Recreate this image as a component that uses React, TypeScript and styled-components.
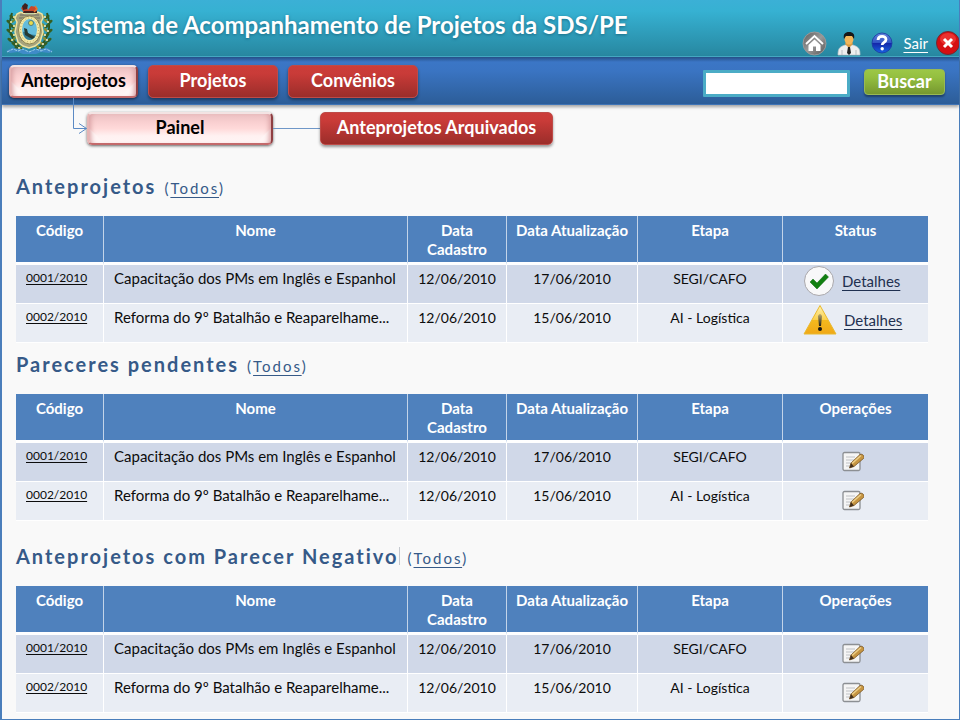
import React from "react";
import styled, { createGlobalStyle, css } from "styled-components";

const GlobalStyle = createGlobalStyle`
  *, *::before, *::after { box-sizing: border-box; }
  html, body, #root { margin: 0; min-height: 100%; }
  body {
    background: #f9f9f9;
    color: #0c0c0c;
    font-family: Lato, "Open Sans", sans-serif;
    font-size: 15px;
    line-height: 19px;
  }
  button, input { font: inherit; }
`;

const Page = styled.div`
  min-height: 100vh;
  background: #f9f9f9;
  border: solid #4a7ebb;
  border-width: 0 1px 1px 2px;
`;

const Header = styled.header`
  display: flex;
  align-items: center;
  height: 57px;
  padding-left: 2px;
  background: linear-gradient(#3bb0d6, #36b1d2 20%, #2787a0);
  border-bottom: 1px solid #46aac5;
`;

const Title = styled.h1`
  flex: 1;
  margin: 0 0 6px 8px;
  color: #fff;
  font-size: 24px;
  line-height: 32px;
  font-weight: 700;
  white-space: nowrap;
  text-shadow: 0 1px 3px #1b6c86;
`;

const Tools = styled.div`
  display: flex;
  align-items: center;
  align-self: flex-end;
  gap: 10px;
  height: 26px;
`;

const IconButton = styled.button`
  display: flex;
  padding: 0;
  border: 0;
  background: none;
  cursor: pointer;
`;

const ExitLink = styled.a`
  color: #fff;
  text-underline-offset: 3px;
`;

const ExitGroup = styled.div`
  display: flex;
  align-items: center;
  gap: 8px;
`;

const Nav = styled.nav`
  display: flex;
  align-items: flex-start;
  gap: 10px;
  height: 48px;
  padding: 8px 14px 0 7px;
  background: linear-gradient(#254f86, #3b76c6 5px, #3a74c2 30%, #2c5d98);
  border-bottom: 1px solid #3f74b6;
  box-shadow: 0 2px 3px rgba(0, 0, 0, 0.35);
`;

const TabSlot = styled.div`
  position: relative;
`;

const Tab = styled.button<{ $active?: boolean; $width: number }>`
  display: block;
  width: ${(p) => p.$width}px;
  height: 33px;
  padding: 0 0 2px;
  border: 1px solid #be4b48;
  border-radius: 5px;
  background: linear-gradient(#cb3d3a, #c93b38 25%, #9b2d2a);
  box-shadow: 0 2px 3px rgba(0, 0, 0, 0.4);
  color: #fff;
  font-size: 18px;
  font-weight: 700;
  white-space: nowrap;
  cursor: pointer;

  ${(p) =>
    p.$active &&
    css`
      border: 2px solid;
      border-color: #f3e3e3 #8f3f42 #c46a6c #e6b4b4;
      background:
        linear-gradient(45deg, #fff5f5 10px, transparent 11px),
        linear-gradient(-45deg, #fff5f5 10px, transparent 11px),
        linear-gradient(#eabfc1, #f9cfd0 8px, #ffd9d9 50%, #fff1f1 75%, #fff4f4);
      box-shadow:
        0 1px 3px rgba(0, 0, 0, 0.6),
        inset 6px 0 5px -4px #d9a0a3,
        inset -6px 0 5px -4px #d9a0a3;
      color: #000;
    `}
`;

const Elbow = styled.svg`
  position: absolute;
  top: 100%;
  left: 63px;
`;

const Search = styled.form`
  display: flex;
  align-items: flex-start;
  gap: 14px;
  margin-left: auto;
  padding-top: 4px;
`;

const SearchInput = styled.input`
  width: 147px;
  height: 27px;
  margin-top: 1px;
  padding: 0 4px;
  border: 3px solid #4bacc6;
  border-radius: 1px;
  background: #fff;
  outline: 0;
`;

const SearchButton = styled.button`
  width: 81px;
  height: 26px;
  padding: 0 0 2px;
  border: 1px solid #98b954;
  border-radius: 4px;
  background: linear-gradient(#9cc746, #94bf40 30%, #76982f);
  box-shadow: 0 2px 2px rgba(0, 0, 0, 0.35);
  color: #fff;
  font-size: 18px;
  font-weight: 700;
  cursor: pointer;
`;

const SubNav = styled.nav`
  display: flex;
  align-items: center;
  padding: 7px 14px 0 85px;
`;

const Joint = styled.span`
  width: 47px;
  height: 1px;
  background: #6f97c8;
`;

const Main = styled.main`
  padding: 29px 31px 6px 14px;
`;

const Section = styled.section<{ $space: number }>`
  margin-bottom: ${(p) => p.$space}px;
`;

const SectionTitle = styled.h2`
  display: flex;
  align-items: baseline;
  gap: 8px;
  margin: 0 0 14px;
  color: #365a88;
  font-size: 20px;
  line-height: 28px;
  font-weight: 700;
  letter-spacing: 2px;
  white-space: nowrap;
`;

const SectionName = styled.span<{ $caret?: boolean }>`
  border-right: ${(p) => (p.$caret ? "1px solid #c4c8ce" : "0")};
  line-height: 18px;
`;

const AllLinks = styled.span`
  font-size: 15px;
  font-weight: 400;
`;

const AllLink = styled.a`
  color: inherit;
  text-underline-offset: 3px;
`;

const Table = styled.table`
  width: 100%;
  table-layout: fixed;
  border-collapse: separate;
  border-spacing: 0;
`;

const HeadCell = styled.th`
  height: 49px;
  padding: 5px 6px 3px;
  border-right: 1px solid #c3d4e9;
  border-bottom: 3px solid #fff;
  background: #4f81bd;
  color: #fff;
  font-size: 15px;
  font-weight: 700;
  text-align: center;
  vertical-align: top;

  &:last-child { border-right: 0; }
`;

const Row = styled.tr`
  background: #e9edf4;

  &:nth-child(odd) { background: #d0d8e8; }
`;

const Cell = styled.td<{ $left?: boolean }>`
  height: 39px;
  padding: 4px ${(p) => (p.$left ? 10 : 4)}px;
  border-right: 1px solid #fff;
  border-bottom: 1px solid #fff;
  font-size: ${(p) => (p.$left ? 15 : 14)}px;
  text-align: ${(p) => (p.$left ? "left" : "center")};
  vertical-align: top;
  white-space: nowrap;

  &:last-child { border-right: 0; }
`;

const IconCell = styled(Cell)`
  padding: 0 20px;
`;

const CodeLink = styled.a`
  display: block;
  color: #0c0c0c;
  font-size: 12px;
  line-height: 17px;
  text-underline-offset: 2px;
`;

const Status = styled.div`
  display: flex;
  align-items: center;
  gap: 7px;
`;

const DetailLink = styled.a`
  color: #1f3050;
  font-size: 15px;
  text-underline-offset: 3px;
`;

const EditButton = styled(IconButton)`
  margin: 8px 0 0 39px;
`;

const leaves = [
  [10, 15], [7, 20], [10, 24], [7, 29], [10, 33], [8, 38], [12, 42], [15, 46],
];

function Emblem() {
  return (
    <svg width="50" height="52" viewBox="0 0 50 52" role="img" aria-label="Brasão de Pernambuco">
      <g fill="none" stroke="#2f5520" strokeWidth="2">
        <path d="M8 11C4 23 5 37 18 47" />
        <path d="M43 11C47 23 46 37 33 47" />
      </g>
      {leaves.map(([x, y], i) => (
        <g key={i}>
          <ellipse cx={x - 2} cy={y} rx="3" ry="1.5" fill="#355e22" transform={`rotate(35 ${x - 2} ${y})`} />
          <ellipse cx={x + 2} cy={y - 1} rx="2.6" ry="1.3" fill="#6f8b35" transform={`rotate(-40 ${x + 2} ${y - 1})`} />
          <circle cx={x} cy={y} r="1" fill="#f5eeb8" />
          <ellipse cx={53 - x} cy={y} rx="3" ry="1.5" fill="#355e22" transform={`rotate(-35 ${53 - x} ${y})`} />
          <ellipse cx={49 - x} cy={y - 1} rx="2.6" ry="1.3" fill="#8b8e35" transform={`rotate(40 ${49 - x} ${y - 1})`} />
          <circle cx={51 - x} cy={y} r="1" fill="#f2f0d8" />
        </g>
      ))}
      <path d="M13 12l4-2 4 2h9l4-2 4 2 1 4-2 4 2 10-3 10-5 4-6 2-6-2-5-4-3-10 2-10-2-4z" fill="#a5a37d" stroke="#eee3a0" strokeWidth="1.5" />
      <path d="M16 13h19M15 16h21M16 19h19M15 34h21M17 38h17" stroke="#716b66" strokeWidth="1" />
      <ellipse cx="25.500" cy="28" rx="11" ry="14" fill="#f2e7a5" stroke="#8e8652" strokeWidth="1" />
      <ellipse cx="25.500" cy="28" rx="9" ry="12" fill="none" stroke="#b6a75d" strokeWidth="1" strokeDasharray="1 2" />
      <ellipse cx="25.500" cy="27.500" rx="7.500" ry="10.500" fill="#63bcdc" />
      <path d="M19 30c3-1 5 3 13 3-1 3-4 5-6.500 5-4 0-6-4-6.500-8z" fill="#347b91" />
      <path d="M20 26l3 1 1 4 7 4-3 2-7-4z" fill="#263b32" />
      <circle cx="27" cy="21" r="2.500" fill="#e9dc4c" stroke="#537e78" />
      <path d="M20 11l-3-5 3-3 3 2 1 3 3-4 5 1 1 5-3 1z" fill="#c8472b" />
      <path d="M18 4l3-3 3 2-1 4-4 1zM20 9h13v2H19z" fill="#40211f" />
      <path d="M31 4l2 3-3 3" fill="none" stroke="#e7762f" strokeWidth="1.500" />
      <path d="M2 49l6-3 8 1 9 2 9-2 9-1 6 3-4 2-8-1-5 2h-13l-5-2-8 1z" fill="#3f8bc8" />
      <path d="M3 50l6-3 5 2 5-2 6 3 7-3 5 2 5-2 6 3" fill="none" stroke="#9cd0ec" strokeWidth="1" strokeDasharray="3 1" />
    </svg>
  );
}

function HomeIcon() {
  return (
    <svg width="25" height="25" viewBox="0 0 25 25" aria-hidden="true">
      <defs>
        <linearGradient id="home" x1="0" y1="0" x2="1" y2="1">
          <stop stopColor="#5c5c5c" /><stop offset=".5" stopColor="#999" /><stop offset="1" stopColor="#555" />
        </linearGradient>
      </defs>
      <circle cx="12.500" cy="12.500" r="11.500" fill="url(#home)" stroke="#999" />
      <path d="M4 13l8.500-8 8.500 8" fill="none" stroke="#fff" strokeWidth="1.800" />
      <path d="M6.500 14l6-5.500 6 5.500v6H14v-4.500h-3V20H6.500z" fill="#fff" />
    </svg>
  );
}

function UserIcon() {
  return (
    <svg width="24" height="25" viewBox="0 0 24 25" aria-hidden="true">
      <path d="M1 24c0-6 1-8 7-10h8c6 2 7 4 7 10z" fill="#eee" stroke="#bfc4c8" strokeWidth=".7" />
      <path d="M5 19v5M19 19v5" stroke="#b8bcc0" />
      <path d="M8 13l4 4 4-4-1-2H9z" fill="#d99b45" />
      <ellipse cx="12" cy="8" rx="4.500" ry="5.500" fill="#f2b65b" />
      <path d="M7 8c-1-5 1-7 5-7s6 2 5 7l-2-3H9z" fill="#181818" />
      <path d="M11 16h2l1 6-2 2-2-2z" fill="#222" />
    </svg>
  );
}

function HelpIcon() {
  return (
    <svg width="22" height="22" viewBox="0 0 22 22" aria-hidden="true">
      <defs>
        <linearGradient id="help" x1="0" y1="0" x2="0" y2="1">
          <stop stopColor="#6687dc" /><stop offset=".48" stopColor="#3155c5" />
          <stop offset=".5" stopColor="#1425a7" /><stop offset="1" stopColor="#1764e2" />
        </linearGradient>
      </defs>
      <circle cx="11" cy="11" r="10" fill="url(#help)" stroke="#1a37a2" strokeWidth=".8" />
      <path d="M7 8c.3-5 8-4.700 8-.5 0 3-3.800 2.700-3.800 5.500" fill="none" stroke="#fff" strokeWidth="2.800" />
      <circle cx="11.200" cy="16.800" r="1.700" fill="#fff" />
    </svg>
  );
}

function CloseIcon() {
  return (
    <svg width="23" height="24" viewBox="0 0 23 24" aria-hidden="true">
      <circle cx="12" cy="12" r="11.500" fill="#d60e12" stroke="#702b34" />
      <ellipse cx="12" cy="8" rx="8" ry="6" fill="#f54a42" opacity=".6" />
      <path d="M8 8l8 8M16 8l-8 8" stroke="#fff" strokeWidth="3" />
    </svg>
  );
}

function CheckIcon() {
  return (
    <svg width="32" height="32" viewBox="0 0 32 32" role="img" aria-label="Aprovado">
      <circle cx="16" cy="16" r="14.500" fill="#f8f8f9" stroke="#a9a7ab" />
      <path d="M7 17l3-3 4 4 8.500-9 3 3L14 24z" fill="#128012" stroke="#0a690b" strokeWidth=".5" />
    </svg>
  );
}

function WarningIcon() {
  return (
    <svg width="34" height="32" viewBox="1 0 32 32" role="img" aria-label="Atenção">
      <defs>
        <linearGradient id="warning" x1="0" y1="0" x2="0" y2="1">
          <stop stopColor="#fff3b1" /><stop offset=".5" stopColor="#fbd04b" />
          <stop offset=".52" stopColor="#f5b91d" /><stop offset="1" stopColor="#f0a817" />
        </linearGradient>
        <linearGradient id="mark" x1="0" y1="0" x2="0" y2="1">
          <stop stopColor="#bba96c" /><stop offset="1" stopColor="#201d16" />
        </linearGradient>
      </defs>
      <path d="M17 1.500L33 30H1z" fill="url(#warning)" stroke="#e9b92e" strokeLinejoin="round" />
      <path d="M15 12q2-4 4 0l-1 10h-2z" fill="url(#mark)" />
      <circle cx="17" cy="25" r="2" fill="#161411" />
    </svg>
  );
}

function EditIcon() {
  return (
    <svg width="22" height="22" viewBox="0 0 22 22" aria-hidden="true">
      <rect x="1" y="1.500" width="17" height="18" rx="1.500" fill="#f5f5f5" stroke="#8c8f93" strokeWidth="1.300" />
      <path d="M4 6h9M4 9h8M4 12h5M4 15h4" stroke="#bfc1c4" />
      <path d="M7.500 17l1.500-5 9-8.500q2-1 3.500 1t0 3L12 15.500z" fill="#c69542" stroke="#795525" strokeWidth=".8" />
      <path d="M10 12.500l9-8" stroke="#edcf88" strokeWidth="1.500" />
      <path d="M7.500 17l1.500-5 3 3.500z" fill="#44301e" />
    </svg>
  );
}

type Kind = "status" | "edit";

const rows = [
  { code: "0001/2010", name: "Capacitação dos PMs em Inglês e Espanhol", created: "12/06/2010", updated: "17/06/2010", stage: "SEGI/CAFO", ok: true },
  { code: "0002/2010", name: "Reforma do 9º Batalhão e Reaparelhame...", created: "12/06/2010", updated: "15/06/2010", stage: "AI - Logística", ok: false },
];

const columnWidths = [88, 304, 99, 131, 145, 145];

const Column = styled.col<{ $width: number }>`
  width: ${(p) => p.$width}px;
`;

function ProjectTable({ kind, label }: { kind: Kind; label: string }) {
  return (
    <Table aria-label={label}>
      <colgroup>
        {columnWidths.map((w, i) => <Column key={i} $width={w} />)}
      </colgroup>
      <thead>
        <tr>
          {["Código", "Nome", "Data Cadastro", "Data Atualização", "Etapa", kind === "status" ? "Status" : "Operações"].map((h) => (
            <HeadCell key={h} scope="col">{h}</HeadCell>
          ))}
        </tr>
      </thead>
      <tbody>
        {rows.map((r) => (
          <Row key={r.code}>
            <Cell $left><CodeLink href="#">{r.code}</CodeLink></Cell>
            <Cell $left>{r.name}</Cell>
            <Cell>{r.created}</Cell>
            <Cell>{r.updated}</Cell>
            <Cell>{r.stage}</Cell>
            <IconCell>
              {kind === "status" ? (
                <Status>
                  {r.ok ? <CheckIcon /> : <WarningIcon />}
                  <DetailLink href="#">Detalhes</DetailLink>
                </Status>
              ) : (
                <EditButton type="button" aria-label={`Editar ${r.code}`}><EditIcon /></EditButton>
              )}
            </IconCell>
          </Row>
        ))}
      </tbody>
    </Table>
  );
}

const sections: { title: string; kind: Kind; space: number; caret?: boolean }[] = [
  { title: "Anteprojetos", kind: "status", space: 9 },
  { title: "Pareceres pendentes", kind: "edit", space: 23 },
  { title: "Anteprojetos com Parecer Negativo", kind: "edit", space: 0, caret: true },
];

export default function App() {
  return (
    <>
      <GlobalStyle />
      <Page>
        <Header>
          <Emblem />
          <Title>Sistema de Acompanhamento de Projetos da SDS/PE</Title>
          <Tools>
            <IconButton type="button" aria-label="Início"><HomeIcon /></IconButton>
            <IconButton type="button" aria-label="Usuário"><UserIcon /></IconButton>
            <IconButton type="button" aria-label="Ajuda"><HelpIcon /></IconButton>
            <ExitGroup>
              <ExitLink href="#">Sair</ExitLink>
              <IconButton type="button" aria-label="Fechar"><CloseIcon /></IconButton>
            </ExitGroup>
          </Tools>
        </Header>
        <Nav aria-label="Principal">
          <TabSlot>
            <Tab type="button" $active $width={129}>Anteprojetos</Tab>
            <Elbow width="16" height="38" viewBox="0 0 16 38" fill="none" stroke="#5b8ac4" aria-hidden="true">
              <path d="M1.500 0v30.500h13M7 25.500l7.500 5-7.500 5" />
            </Elbow>
          </TabSlot>
          <Tab type="button" $width={130}>Projetos</Tab>
          <Tab type="button" $width={130}>Convênios</Tab>
          <Search onSubmit={(e) => e.preventDefault()}>
            <SearchInput type="search" aria-label="Buscar projetos" />
            <SearchButton type="submit">Buscar</SearchButton>
          </Search>
        </Nav>
        <SubNav aria-label="Anteprojetos">
          <Tab type="button" $active $width={186}>Painel</Tab>
          <Joint />
          <Tab type="button" $width={233}>Anteprojetos Arquivados</Tab>
        </SubNav>
        <Main>
          {sections.map((s) => (
            <Section key={s.title} $space={s.space}>
              <SectionTitle>
                <SectionName $caret={s.caret}>{s.title}</SectionName>
                <AllLinks>(<AllLink href="#">Todos</AllLink>)</AllLinks>
              </SectionTitle>
              <ProjectTable kind={s.kind} label={s.title} />
            </Section>
          ))}
        </Main>
      </Page>
    </>
  );
}
